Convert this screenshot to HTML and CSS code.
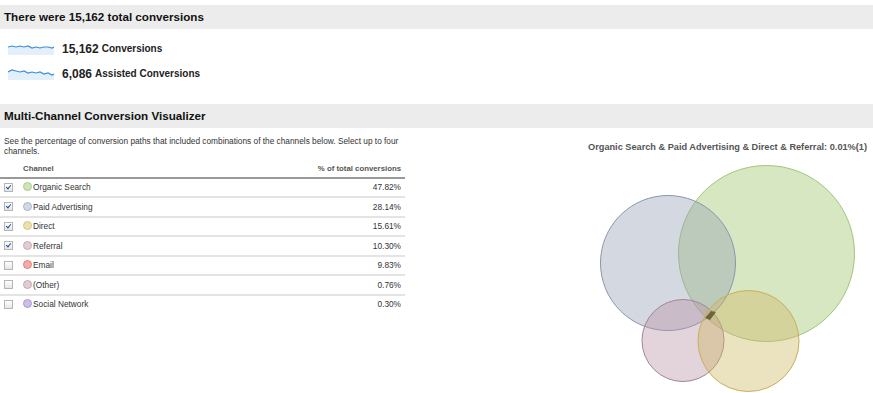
FILE: index.html
```html
<!DOCTYPE html>
<html lang="en">
<head>
  <meta charset="UTF-8">
  <title>Multi-Channel Conversions</title>
  <link rel="stylesheet" href="styles.css">
</head>
<body>
  <div class="bar">There were 15,162 total conversions</div>

  <ul class="stats">
    <li>
      <svg class="spark" viewBox="0 0 46 12"><path class="area" d="M0 4 L4 3 L8 4 L12 3 L16 4 L20 3 L24 5 L28 4 L32 5 L36 4 L40 4 L44 5 L46 4 L46 12 L0 12Z"/><path class="line" d="M0 4 L4 3 L8 4 L12 3 L16 4 L20 3 L24 5 L28 4 L32 5 L36 4 L40 4 L44 5 L46 4"/></svg>
      <b>15,162</b> <span>Conversions</span>
    </li>
    <li>
      <svg class="spark" viewBox="0 0 46 12"><path class="area" d="M0 4 L4 2 L8 3 L12 4 L16 3 L20 5 L24 4 L28 5 L32 4 L36 6 L40 5 L44 7 L46 6 L46 12 L0 12Z"/><path class="line" d="M0 4 L4 2 L8 3 L12 4 L16 3 L20 5 L24 4 L28 5 L32 4 L36 6 L40 5 L44 7 L46 6"/></svg>
      <b>6,086</b> <span>Assisted Conversions</span>
    </li>
  </ul>

  <div class="bar bar2">Multi-Channel Conversion Visualizer</div>

  <div class="viz">
    <div class="left">
      <p class="desc">See the percentage of conversion paths that included combinations of the channels below. Select up to four channels.</p>
      <table class="tbl">
        <thead>
          <tr><th></th><th class="name">Channel</th><th class="pct">% of total conversions</th></tr>
        </thead>
        <tbody>
          <tr><td><span class="cb on"></span></td><td class="name"><i class="dot green"></i>Organic Search</td><td class="pct">47.82%</td></tr>
          <tr><td><span class="cb on"></span></td><td class="name"><i class="dot blue"></i>Paid Advertising</td><td class="pct">28.14%</td></tr>
          <tr><td><span class="cb on"></span></td><td class="name"><i class="dot yellow"></i>Direct</td><td class="pct">15.61%</td></tr>
          <tr><td><span class="cb on"></span></td><td class="name"><i class="dot pink"></i>Referral</td><td class="pct">10.30%</td></tr>
          <tr><td><span class="cb"></span></td><td class="name"><i class="dot red"></i>Email</td><td class="pct">9.83%</td></tr>
          <tr><td><span class="cb"></span></td><td class="name"><i class="dot rose"></i>(Other)</td><td class="pct">0.76%</td></tr>
          <tr><td><span class="cb"></span></td><td class="name"><i class="dot violet"></i>Social Network</td><td class="pct">0.30%</td></tr>
        </tbody>
      </table>
    </div>

    <div class="right">
      <p class="caption">Organic Search &amp; Paid Advertising &amp; Direct &amp; Referral: 0.01%(1)</p>
      <svg class="venn" viewBox="590 160 283 233">
        <circle class="c-green" cx="766.5" cy="253.5" r="88"/>
        <circle class="c-blue" cx="668" cy="263" r="67.5"/>
        <circle class="c-pink" cx="683" cy="340.5" r="41"/>
        <circle class="c-yellow" cx="748.5" cy="341" r="50.5"/>
        <path class="core" d="M705 318 L711 311 L716 312 L710 320Z"/>
      </svg>
    </div>
  </div>
</body>
</html>
```

FILE: styles.css
```css
html, body{
  margin: 0;
  padding: 0;
}
body{
  font-family: "Liberation Sans", Arial, sans-serif;
  color: #222;
  background: #fff;
  width: 873px;
  height: 393px;
  overflow: hidden;
}
ul, p{
  margin: 0;
  padding: 0;
  list-style: none;
}

/* 회색 타이틀바 */
.bar{
  margin-top: 5px;
  height: 24px;
  line-height: 24px;
  padding-left: 4px;
  background: #ececec;
  font-weight: bold;
  font-size: 11.65px;
  color: #111;
}
.bar2{
  margin-top: 0;
}

/* 요약 수치 */
.stats{
  padding: 7px 0 18px 8px;
}
.stats>li{
  display: flex;
  align-items: center;
  height: 25px;
}
.stats b{
  font-size: 12px;
  margin: 0 3px 0 8px;
}
.stats span{
  font-weight: bold;
  font-size: 10px;
}
.spark{
  width: 46px;
  height: 12px;
}
.spark .area{
  fill: #e3f0fb;
}
.spark .line{
  fill: none;
  stroke: #3b8fdb;
  stroke-width: 1.2;
}

/* 비주얼라이저 */
.viz{
  display: flex;
}
.left{
  width: 405px;
  padding-top: 8px;
}
.desc{
  font-size: 8.3px;
  line-height: 10px;
  padding-left: 4px;
  color: #333;
}
.tbl{
  margin-top: 4px;
  width: 405px;
  border-collapse: collapse;
  font-size: 8.3px;
  color: #333;
}
.tbl th{
  font-weight: bold;
  color: #555;
  font-size: 7.8px;
  height: 14.5px;
  text-align: left;
  border-bottom: 2px solid #999;
}
.tbl td{
  height: 17.5px;
  padding: 0;
  border-bottom: 2px solid #e4e4e4;
}
.tbl tr:last-child td{
  border-bottom: none;
}
.tbl th:first-child, .tbl td:first-child{
  width: 23px;
  padding: 0;
}
.tbl .name{
  padding: 0;
}
.tbl .pct{
  text-align: right;
  padding-right: 4px;
}

/* 체크박스 */
.cb{
  display: block;
  box-sizing: border-box;
  width: 9px;
  height: 9px;
  margin-left: 4px;
  border: 1px solid #b5b5b5;
  background: linear-gradient(#fff, #e6e6e6);
  position: relative;
}
.cb.on::after{
  content: "";
  position: absolute;
  left: 2px;
  top: 0;
  width: 2px;
  height: 4px;
  border: solid #1f4f9e;
  border-width: 0 1.3px 1.3px 0;
  transform: rotate(40deg);
}

/* 채널 색상 점 */
.dot{
  display: inline-block;
  box-sizing: border-box;
  width: 9px;
  height: 9px;
  border-radius: 50%;
  margin-right: 1px;
  vertical-align: -1px;
  border: 1px solid;
}
.green{ background: #cfe3bd; border-color: #a9cc8c; }
.blue{ background: #d3d9e4; border-color: #aab3c6; }
.yellow{ background: #ede0b0; border-color: #d9c67e; }
.pink{ background: #e0cdd4; border-color: #c8a8b6; }
.red{ background: #f5a9a9; border-color: #e67e7e; }
.rose{ background: #e0cdd4; border-color: #c8a8b6; }
.violet{ background: #cdbde9; border-color: #ad98d9; }

/* 벤다이어그램 */
.right{
  flex: 1;
  display: flex;
  flex-direction: column;
  align-items: flex-end;
}
.caption{
  margin-top: 14px;
  padding-right: 6px;
  font-size: 9.2px;
  font-weight: bold;
  color: #555;
  line-height: 10px;
}
.venn{
  margin-top: 8px;
  width: 283px;
  height: 233px;
}
.venn circle{
  fill-opacity: 0.4;
  stroke-width: 1;
}
.c-green{ fill: #9ac467; stroke: #a3c47a; }
.c-blue{ fill: #94a0b4; stroke: #8996ad; }
.c-pink{ fill: #b991a3; stroke: #a3849a; }
.c-yellow{ fill: #cdb762; stroke: #c9b05a; }
.core{
  fill: #6b6838;
}
```
